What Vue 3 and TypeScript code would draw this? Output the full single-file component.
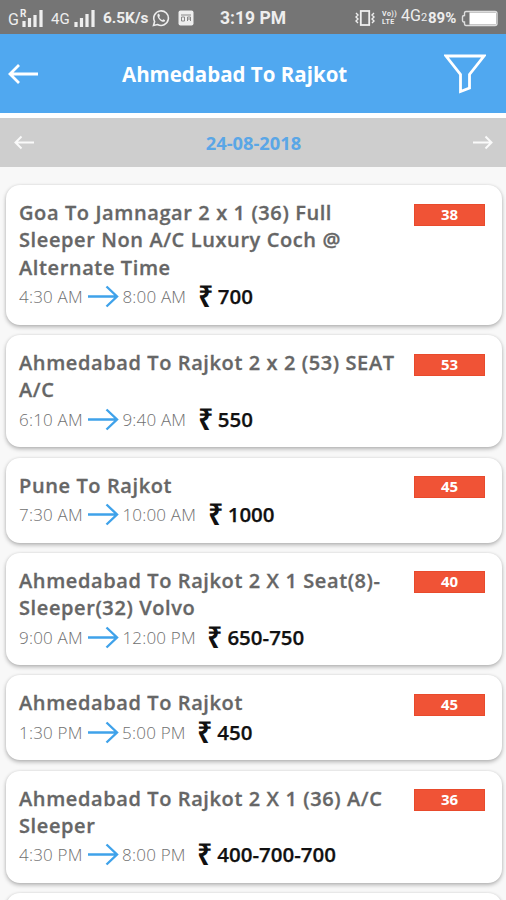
<script setup lang="ts">
interface Trip {
  id: number
  lines: string[]
  departs: string
  arrives: string
  fare: string
  seats: number
}

const trips: Trip[] = [
  { id: 1, lines: ['Goa To Jamnagar 2 x 1 (36) Full', 'Sleeper Non A/C Luxury Coch @', 'Alternate Time'], departs: '4:30 AM', arrives: '8:00 AM', fare: '700', seats: 38 },
  { id: 2, lines: ['Ahmedabad To Rajkot 2 x 2 (53) SEAT', 'A/C'], departs: '6:10 AM', arrives: '9:40 AM', fare: '550', seats: 53 },
  { id: 3, lines: ['Pune To Rajkot'], departs: '7:30 AM', arrives: '10:00 AM', fare: '1000', seats: 45 },
  { id: 4, lines: ['Ahmedabad To Rajkot 2 X 1 Seat(8)-', 'Sleeper(32) Volvo'], departs: '9:00 AM', arrives: '12:00 PM', fare: '650-750', seats: 40 },
  { id: 5, lines: ['Ahmedabad To Rajkot'], departs: '1:30 PM', arrives: '5:00 PM', fare: '450', seats: 45 },
  { id: 6, lines: ['Ahmedabad To Rajkot 2 X 1 (36) A/C', 'Sleeper'], departs: '4:30 PM', arrives: '8:00 PM', fare: '400-700-700', seats: 36 },
]
</script>

<template>
  <div class="screen">
    <div class="status">
      <span class="net g">G</span>
      <span class="roam">R</span>
      <svg class="bars" width="22" height="17" viewBox="0 0 22 17"><path d="M2 11v6M7.500 8v9M13 5v12M19 0v17" stroke="#eee" stroke-width="3.200" /></svg>
      <span class="net four">4G</span>
      <svg class="bars two" width="22" height="17" viewBox="0 0 22 17"><path d="M2 12v5M7.500 8v9M13 4v13M19 0v17" stroke="#eee" stroke-width="3.200" /></svg>
      <span class="speed">6.5K/s</span>
      <svg class="chat" width="18" height="18" viewBox="0 0 18 18" fill="none">
        <path d="M1.500 16.500l1.100-4A7.300 7.300 0 1 1 5.500 15.500z" stroke="#eee" stroke-width="1.600" />
        <path d="M6 4.800C4.700 6 5.600 8.600 7.300 10.500s4.300 3 5.500 1.800c.8-.9.200-1.500-1.500-2.100l-1.100 1C8.700 10.500 7.700 9.300 7.200 8l.8-1.100C7.500 5 7 4.300 6 4.800z" fill="#eee" />
      </svg>
      <svg class="app" width="16" height="16" viewBox="0 0 16 16" fill="none">
        <rect x=".5" y=".5" width="15" height="15" rx="2" fill="#eee" />
        <path d="M3 5h10M3.500 7v4h3V7zm6 4V7h3v4M9.500 9h3" stroke="#888" />
      </svg>
      <span class="clock">3:19 PM</span>
      <svg class="vibrate" width="20" height="16" viewBox="0 0 20 16" fill="none" stroke="#eee">
        <rect x="5.800" y="1" width="8.400" height="14" stroke-width="1.800" />
        <path d="M1 3l2 2-2 2 2 2-2 2 2 2M19 3l-2 2 2 2-2 2 2 2-2 2" stroke-width="1.400" />
      </svg>
      <span class="volte"><span>Vo))</span><span>LTE</span></span>
      <span class="net lte">4G<small>2</small></span>
      <span class="percent">89%</span>
      <svg class="battery" width="38" height="17" viewBox="0 0 38 17">
        <path d="M5 1.500h29q2 0 2 2v10q0 2-2 2H5q-1.500 0-1.500-2v-1.500q-2 0-2-1.500V7q0-1.500 2-1.500V3.500q0-2 1.500-2z" fill="none" stroke="#ddd" stroke-width="1.400" />
        <path d="M8.500 2.500h26.500v12H8.500z" fill="#fff" />
      </svg>
    </div>

    <header class="header">
      <svg class="back" width="31" height="22" viewBox="0 0 31 22"><path d="M11 2L2 11l9 9M2 11h28" /></svg>
      <h1>Ahmedabad To Rajkot</h1>
      <svg class="filter" width="42" height="40" viewBox="0 0 42 40"><path d="M2 2h38L25.500 20.500v13.500l-9 3.500v-17z" /></svg>
    </header>

    <nav class="dates">
      <svg width="21" height="15" viewBox="0 0 21 15"><path d="M7.500 1.500l-6 6 6 6M1.500 7.500H20" /></svg>
      <span>24-08-2018</span>
      <svg width="21" height="15" viewBox="0 0 21 15"><path d="M13.500 1.500l6 6-6 6M19.500 7.500H1" /></svg>
    </nav>

    <main class="list">
      <article v-for="trip in trips" :key="trip.id" class="card">
        <div class="info">
          <h2><span v-for="line in trip.lines" :key="line">{{ line }}</span></h2>
          <div class="row">
            <span class="time">{{ trip.departs }}</span>
            <svg class="arrow" width="32" height="23" viewBox="0 0 32 23"><path d="M1 11.500h29M19.500 1.500l10.500 10-10.500 10" /></svg>
            <span class="time">{{ trip.arrives }}</span>
            <span class="rupee">₹</span>
            <span class="fare">{{ trip.fare }}</span>
          </div>
        </div>
        <span class="badge">{{ trip.seats }}</span>
      </article>
      <article class="card next"></article>
    </main>
  </div>
</template>

<style>
body { margin: 0; overflow: hidden; }
</style>

<style scoped>
.screen {
  box-sizing: border-box;
  width: 506px;
  height: 900px;
  overflow: hidden;
  background: #f8f8f8;
  font-family: "Open Sans", "Noto Sans", sans-serif;
}
.status {
  display: flex;
  align-items: center;
  height: 34px;
  box-sizing: border-box;
  padding: 2px 6px 0 8px;
  background: #757575;
  color: #eee;
  font-family: Roboto, sans-serif;
  white-space: nowrap;
}
.status > * { flex: none; }
.net { font-size: 16px; line-height: 20px; }
.g { width: 12px; padding-top: 3px; }
.roam { width: 8px; margin-right: -6px; padding-bottom: 10px; font-size: 10px; font-weight: 700; }
.four { width: 23px; margin-left: 7px; padding-top: 2px; font-size: 15px; }
.speed { width: 48px; margin-left: 7px; font-size: 15.4px; font-weight: 700; }
.chat { margin-left: 1px; }
.app { margin-left: 8px; }
.clock { width: 67px; margin-left: 26px; font-size: 17.5px; font-weight: 700; }
.vibrate { margin-left: 68px; }
.volte { display: flex; flex-direction: column; width: 18px; margin-left: 7px; font-size: 7px; line-height: 8.5px; font-weight: 700; letter-spacing: .5px; }
.lte { width: 25px; margin-left: 1px; padding-bottom: 2px; }
.lte small { font-size: 11px; }
.percent { width: 32px; margin-left: 2px; font-size: 15px; font-weight: 700; }
.battery { margin-left: 1px; }
.header {
  display: flex;
  align-items: center;
  height: 79px;
  box-sizing: border-box;
  padding: 0 20px 0 8px;
  background: #50a8f0;
}
.header svg { flex: none; fill: none; stroke: #fff; stroke-width: 2.8; }
.filter { margin-left: auto; }
h1 { margin: 0 0 0 83px; color: #fff; font-size: 20.5px; font-weight: 700; line-height: 28px; white-space: nowrap; }
.dates {
  display: flex;
  align-items: center;
  justify-content: space-between;
  height: 48px;
  margin-top: 5px;
  padding: 0 13px 1px 14px;
  background: #cecece;
  color: #5aa6e6;
  font-size: 18.3px;
  font-weight: 700;
  box-shadow: 0 -5px 0 #fff;
}
.dates svg { fill: none; stroke: #fafafa; stroke-width: 2; }
.list { display: flex; flex-direction: column; gap: 10.3px; padding: 18px 4px 0 6px; }
.card {
  display: flex;
  align-items: flex-start;
  justify-content: space-between;
  box-sizing: border-box;
  padding: 14px 17px 12.5px 13px;
  border-radius: 14px;
  background: #fff;
  box-shadow: 0 2px 4px rgba(0, 0, 0, .28), 0 0 3px rgba(0, 0, 0, .08);
}
.next { height: 85px; }
h2 { margin: 0; color: #666; font-size: 20px; font-weight: 600; line-height: 27.4px; letter-spacing: .6px; -webkit-text-stroke: .3px #666; }
h2 span { display: block; white-space: nowrap; }
.row { display: flex; align-items: center; height: 31px; white-space: nowrap; }
.time { color: #707070; font-size: 17px; font-weight: 300; letter-spacing: .2px; }
.arrow { margin: 0 3.5px 0 4px; fill: none; stroke: #3fa2ea; stroke-width: 2.4; }
.rupee {
  width: 16px;
  margin-left: 11.5px;
  color: #111;
  font-size: 27px;
  font-weight: 700;
  line-height: 27px;
  transform: translateY(-1px) scale(.96, 1.1);
}
.fare { margin-left: 4px; color: #111; font-size: 20.5px; font-weight: 600; line-height: 28px; padding-bottom: 1px; -webkit-text-stroke: .25px #111; }
.badge {
  box-sizing: border-box;
  flex: none;
  width: 71px;
  height: 22px;
  margin-top: 4.6px;
  border: 1px solid #e84a2c;
  background: #f05336;
  color: #fff;
  font-size: 15px;
  font-weight: 700;
  line-height: 19.5px;
  text-align: center;
}
</style>
